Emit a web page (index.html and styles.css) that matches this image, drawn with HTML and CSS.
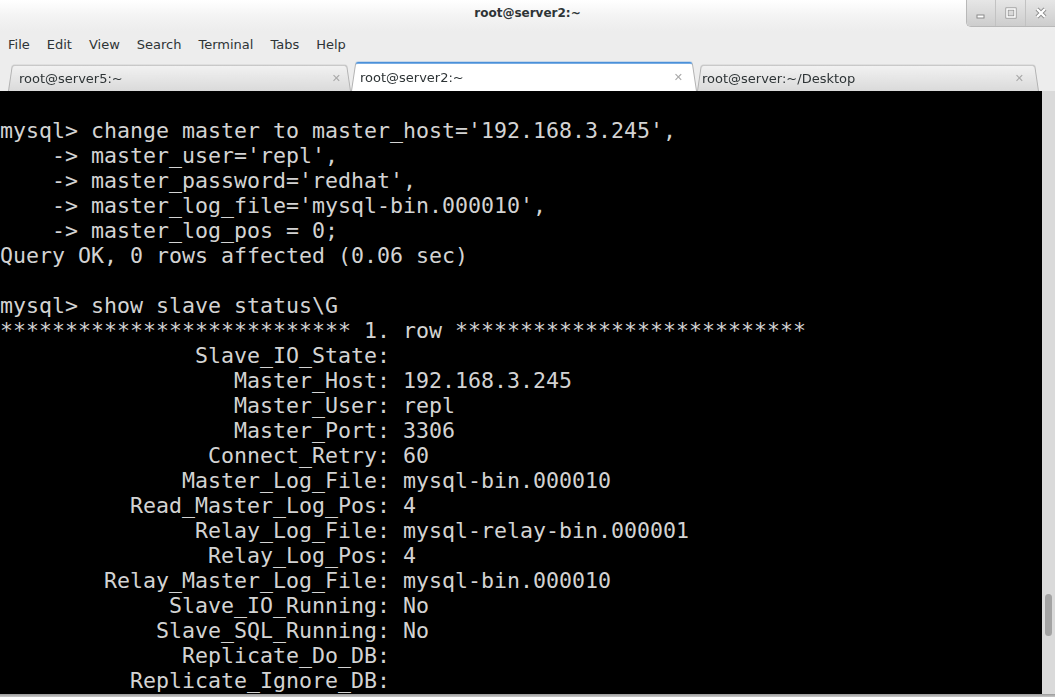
FILE: index.html
```html
<!DOCTYPE html>
<html>
  <head>
    <title>root@server2:~</title>
    <link rel="stylesheet" href="styles.css">
  </head>
  <body>
    <div class="window">
      <header class="titlebar">
        <span></span>
        <span class="title">root@server2:~</span>
        <div class="controls">
          <span class="btn">
            <svg width="12" height="12" viewBox="0 0 12 12"><rect x="2" y="8" width="7" height="3" fill="#fff" stroke="#8a8a8a" stroke-width="1"/></svg>
          </span>
          <span class="btn">
            <svg width="12" height="12" viewBox="0 0 12 12"><rect x="2" y="2" width="8" height="8" fill="none" stroke="#8a8a8a" stroke-width="3"/><rect x="2" y="2" width="8" height="8" fill="none" stroke="#fff" stroke-width="1.6"/></svg>
          </span>
          <span class="btn">
            <svg width="12" height="12" viewBox="0 0 12 12"><path d="M2 2 L10 10 M10 2 L2 10" stroke="#8a8a8a" stroke-width="4"/><path d="M2 2 L10 10 M10 2 L2 10" stroke="#fff" stroke-width="2.4"/></svg>
          </span>
        </div>
      </header>

      <nav class="menubar">
        <span>File</span>
        <span>Edit</span>
        <span>View</span>
        <span>Search</span>
        <span>Terminal</span>
        <span>Tabs</span>
        <span>Help</span>
      </nav>

      <div class="tabbar">
        <div class="tab first">
          <span class="label">root@server5:~</span>
          <span class="close">&#x2715;</span>
        </div>
        <div class="tab active">
          <span class="label">root@server2:~</span>
          <span class="close">&#x2715;</span>
        </div>
        <div class="tab last">
          <span class="label">root@server:~/Desktop</span>
          <span class="close">&#x2715;</span>
        </div>
      </div>

      <div class="content">
<pre class="term">mysql&gt; change master to master_host='192.168.3.245',
    -&gt; master_user='repl',
    -&gt; master_password='redhat',
    -&gt; master_log_file='mysql-bin.000010',
    -&gt; master_log_pos = 0;
Query OK, 0 rows affected (0.06 sec)

mysql&gt; show slave status\G
*************************** 1. row ***************************
               Slave_IO_State: 
                  Master_Host: 192.168.3.245
                  Master_User: repl
                  Master_Port: 3306
                Connect_Retry: 60
              Master_Log_File: mysql-bin.000010
          Read_Master_Log_Pos: 4
               Relay_Log_File: mysql-relay-bin.000001
                Relay_Log_Pos: 4
        Relay_Master_Log_File: mysql-bin.000010
             Slave_IO_Running: No
            Slave_SQL_Running: No
              Replicate_Do_DB: 
          Replicate_Ignore_DB: </pre>
        <div class="scrollbar">
          <div class="thumb"></div>
        </div>
      </div>
      <div class="bottom"></div>
    </div>
  </body>
</html>
```

FILE: styles.css
```css
html, body {
    margin: 0;
    padding: 0;
    background: #ededed;
}
body {
    font-family: "DejaVu Sans", sans-serif;
    font-size: 13px;
    color: #2e3436;
}
.window {
    width: 1055px;
    height: 697px;
    display: flex;
    flex-direction: column;
    overflow: hidden;
    background: #ededed;
}
/* title bar */
.titlebar {
    height: 31px;
    flex: none;
    display: grid;
    grid-template-columns: 1fr auto 1fr;
    background: linear-gradient(#ffffff, #f4f4f4 50%, #ededed);
}
.title {
    font-weight: bold;
    font-size: 12px;
    line-height: 26px;
    color: #2e3436;
}
.controls {
    justify-self: end;
    display: flex;
    height: 26px;
    border-left: 1px solid #b8b8b8;
    border-bottom: 1px solid #b8b8b8;
    border-bottom-left-radius: 5px;
    overflow: hidden;
}
.controls .btn {
    width: 29px;
    display: flex;
    align-items: center;
    justify-content: center;
    background: linear-gradient(#e6e6e6, #cdcdcd);
    border-left: 1px solid #c2c2c2;
}
.controls .btn:first-child {
    border-left: none;
    width: 28px;
}
/* menu */
.menubar {
    height: 26px;
    flex: none;
    display: flex;
    align-items: center;
    gap: 17px;
    padding-left: 8px;
}
/* tabs */
.tabbar {
    height: 34px;
    flex: none;
    display: flex;
    align-items: flex-end;
    padding-left: 8px;
}
.tab {
    position: relative;
    height: 27px;
    display: flex;
    align-items: center;
    justify-content: space-between;
    box-sizing: border-box;
}
.tab::before {
    content: "";
    position: absolute;
    inset: 0;
    z-index: 0;
    border: 1px solid #b2b2b2;
    border-bottom: none;
    border-radius: 3px 3px 0 0;
    background: linear-gradient(#f2f2f2, #dadada);
    transform: perspective(80px) rotateX(4deg);
    transform-origin: bottom;
}
.tab .label, .tab .close {
    position: relative;
    z-index: 1;
}
.tab.first {
    width: 343px;
    padding: 2px 10px 0 11px;
}
.tab.active {
    width: 346px;
    height: 30px;
    padding: 2px 14px 0 9px;
    z-index: 2;
}
.tab.active::before {
    background: #ffffff;
    border-color: #b2b2b2;
    border-top: 2px solid #4a90d9;
}
.tab.last {
    width: 342px;
    padding: 2px 15px 0 5px;
}
.close {
    font-size: 11px;
    color: #a8a8a8;
    font-weight: bold;
}
/* terminal body */
.content {
    flex: 1;
    display: flex;
    min-height: 0;
}
.term {
    flex: 1;
    margin: 0;
    padding: 27px 0 0 0;
    background: #000000;
    color: #d3d3d3;
    font-family: "DejaVu Sans Mono", monospace;
    font-size: 21.6px;
    line-height: 25px;
    overflow: hidden;
}
.scrollbar {
    width: 13px;
    flex: none;
    background: #dadada;
    display: flex;
    justify-content: center;
    padding-top: 503px;
    box-sizing: border-box;
}
.thumb {
    width: 7px;
    height: 42px;
    border-radius: 4px;
    background: #a3a3a3;
}
.bottom {
    height: 3px;
    flex: none;
    background: linear-gradient(#9a9a9a, #c8c8c8);
}
```
